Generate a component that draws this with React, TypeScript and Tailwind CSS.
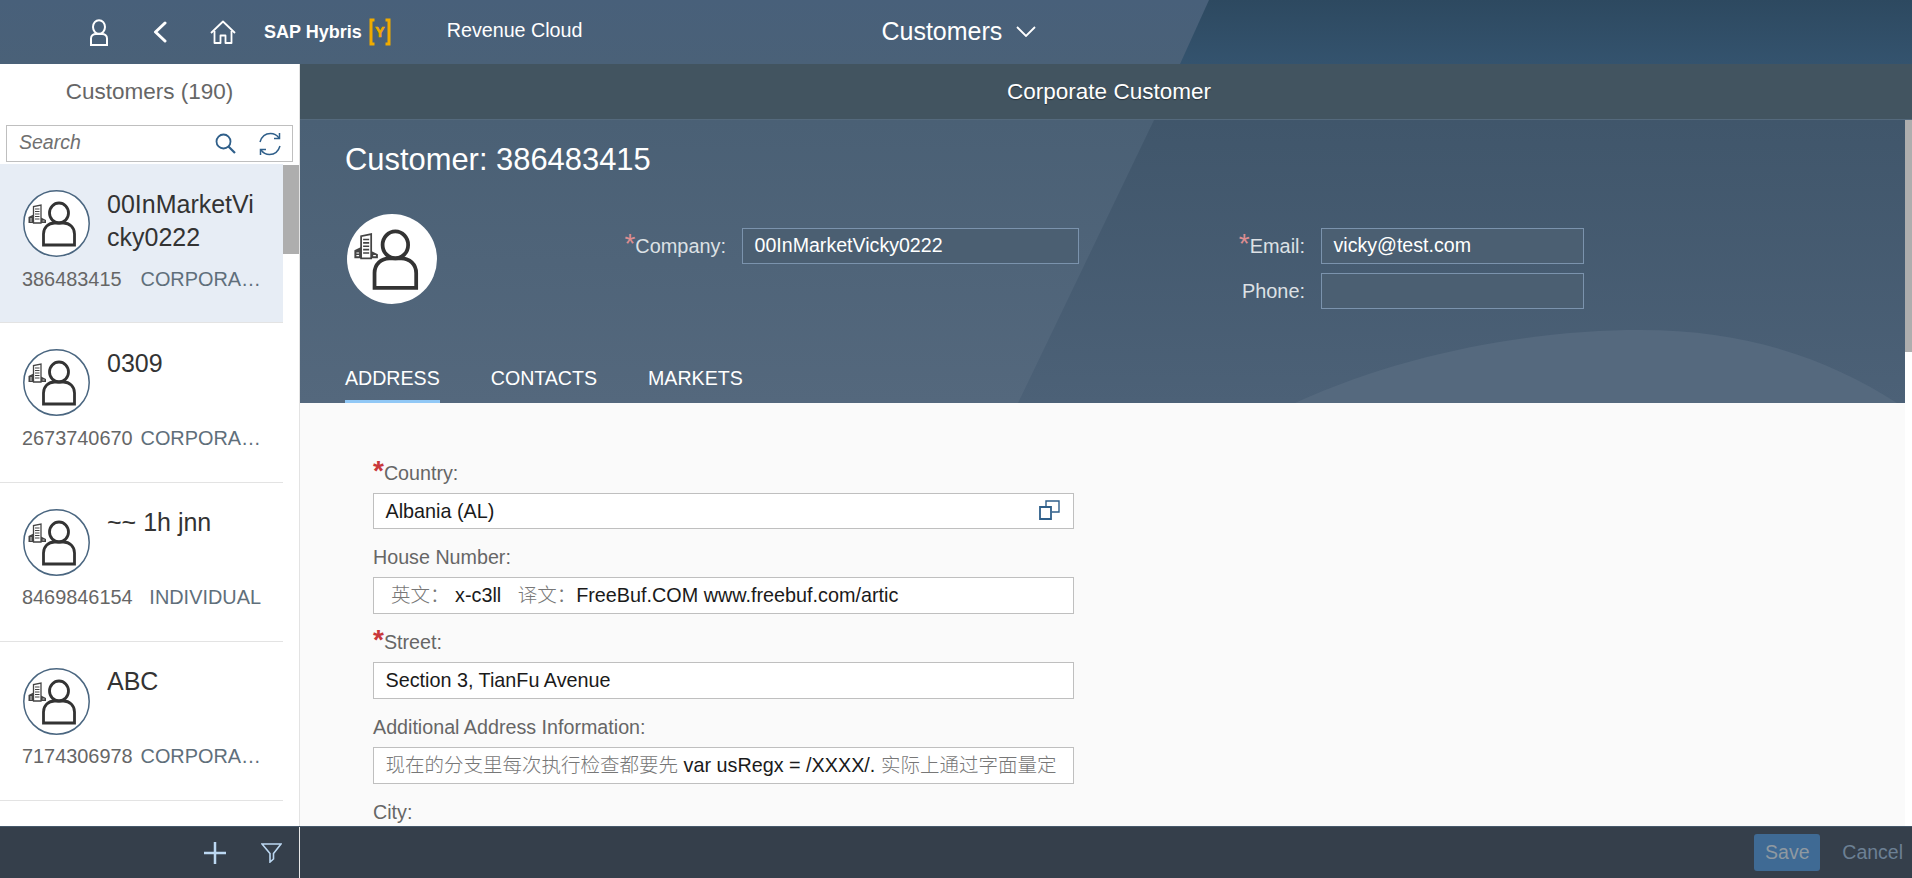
import { ReactNode } from "react";

const customers = [
  { name: "00InMarketVicky0222", id: "386483415", type: "CORPORA…", selected: true },
  { name: "0309", id: "2673740670", type: "CORPORA…" },
  { name: "~~ 1h jnn", id: "8469846154", type: "INDIVIDUAL" },
  { name: "ABC", id: "7174306978", type: "CORPORA…" },
];

function CustomerGlyph() {
  return (
    <>
      {/* building */}
      <path d="M10.500 33V16.500l7.500-1.500V33z" fill="none" stroke="#444" strokeWidth="1.300" />
      <path d="M12 19h4.500M12 21.500h4.500M12 24h4.500M12 26.500h4.500M12 29h4.500" stroke="#444" strokeWidth="1.200" />
      <path d="M5.500 33v-6l5-2.500V33zM18 33v-5.500l5 2.500v3z" fill="#444" />
      <path d="M7 29h2M7 31h2M19.500 31h2" stroke="#fff" strokeWidth="0.800" />
      {/* person */}
      <ellipse cx="36" cy="23" rx="9.500" ry="10" fill="none" stroke="#333" strokeWidth="2.800" />
      <path d="M20.500 55V44c0-6.500 5-11 11-11h9c6 0 11 4.500 11 11v11z" fill="none" stroke="#333" strokeWidth="2.800" />
    </>
  );
}

function Avatar({ big }: { big?: boolean }) {
  if (big) {
    return (
      <svg viewBox="0 0 67 67" className="w-[90px] h-[90px] shrink-0">
        <circle cx="33.500" cy="33.500" r="33.500" fill="#fff" />
        <CustomerGlyph />
      </svg>
    );
  }
  return (
    <svg viewBox="0 0 67 67" className="w-[67px] h-[67px] shrink-0">
      <circle cx="33.500" cy="33.500" r="32.700" fill="#fff" stroke="#4a6680" strokeWidth="1.500" />
      <CustomerGlyph />
    </svg>
  );
}

function CustomerRow({ name, id, type, selected }: { name: string; id: string; type: string; selected?: boolean }) {
  return (
    <div className={`h-[159.25px] w-[283px] shrink-0 pt-[26px] pl-[23px] border-b border-[#e3e3e3] ${selected ? "bg-[#e7edf5]" : "bg-white"}`}>
      <div className="flex h-[67px]">
        <Avatar />
        <div className="ml-[17px] -mt-[2.500px] w-[150px] text-[25px] leading-[33px] text-[#333] break-all">{name}</div>
      </div>
      <div className="mt-[9.500px] -ml-px flex justify-between text-[19.900px] leading-[24px] w-[239px]">
        <span className="text-[#666]">{id}</span>
        <span className="text-[#5f6f7b]">{type}</span>
      </div>
    </div>
  );
}

function HeroField({ label, value, required, labelWidth, inputWidth }: { label: string; value?: string; required?: boolean; labelWidth: string; inputWidth: string }) {
  return (
    <div className="flex items-center h-[36px]">
      <div className={`${labelWidth} text-right text-[19.900px] leading-[24px] text-[#dde1e5]`}>
        {required && <span className="text-[28px] leading-[0] text-[#dc8d90]">*</span>}
        {label}
      </div>
      <div className={`${inputWidth} ml-[16px] h-[36px] border border-[#7b93ad] bg-[#4b5f72] px-[11.500px] text-[19.600px] leading-[32px] text-white`}>{value}</div>
    </div>
  );
}

function FormField({ label, required, height, children, icon }: { label: string; required?: boolean; height: string; children: ReactNode; icon?: ReactNode }) {
  return (
    <div className="mb-[16px]">
      <div className="h-[24px] text-[19.700px] leading-[25px] text-[#666]">
        {required && <span className="text-[28px] leading-[0] font-bold text-[#c9383a]">*</span>}
        {label}
      </div>
      <div className={`relative mt-[8px] ${height} w-[701px] border border-[#bfbfbf] bg-white px-[11.500px] text-[19.800px] leading-[34px] text-[#1a1a1a] whitespace-pre overflow-hidden`}>
        {children}
        {icon}
      </div>
    </div>
  );
}

function Cjk({ children }: { children: ReactNode }) {
  return <span className="text-[19.500px] text-[#777] font-light">{children}</span>;
}

export default function App() {
  return (
    <div className="h-screen w-full flex flex-col overflow-hidden bg-white [font-family:'Liberation_Sans','Noto_Sans_CJK_SC',sans-serif]">
      {/* Top bar */}
      <header className="relative h-16 shrink-0 flex items-center bg-gradient-to-b from-[#48607a] to-[#4a6178] text-white">
        <div className="absolute inset-0 bg-gradient-to-b from-[#2d4960] to-[#34536e] [clip-path:polygon(1209px_0,100%_0,100%_100%,1180px_100%)]" />
        <div className="relative flex items-center h-full w-full">
          <svg viewBox="0 0 20 27" className="ml-[89px] w-[20px] h-[27px]" fill="none" stroke="#fff" strokeWidth="2">
            <ellipse cx="10" cy="8" rx="6" ry="6.800" />
            <path d="M2 26v-6.500C2 16.500 4.500 15 7 15h6c2.500 0 5 1.500 5 4.500V26z" />
          </svg>
          <svg viewBox="0 0 14 22" className="ml-[44px] w-[14px] h-[22px]" fill="none" stroke="#fff" strokeWidth="3" strokeLinecap="round" strokeLinejoin="round">
            <path d="M12 2 2.500 11 12 20" />
          </svg>
          <svg viewBox="0 0 26 24" className="ml-[43px] w-[26px] h-[24px]" fill="none" stroke="#fff" strokeWidth="1.800" strokeLinejoin="round">
            <path d="M1 13 13 1.500 25 13" />
            <path d="M4.500 11v12h6v-7.500h5V23h6V11" />
          </svg>
          <span className="ml-[28px] -mt-px text-[18px] font-bold leading-none">SAP Hybris</span>
          <svg viewBox="0 0 24 28" className="ml-[6px] w-[24px] h-[28px]">
            <path d="M6.500 2H3v24h3.500M17.500 2H21v24h-3.500" fill="none" stroke="#f0ab00" strokeWidth="3" />
            <text x="12" y="19" textAnchor="middle" fontSize="14" fontWeight="700" fill="#f0ab00" stroke="#f0ab00" strokeWidth="0.600">Y</text>
          </svg>
          <span className="ml-[55px] text-[19.700px] leading-none -mt-[3px]">Revenue Cloud</span>
          <span className="ml-[299px] text-[25px] leading-none -mt-[2px]">Customers</span>
          <svg viewBox="0 0 20 11" className="ml-[14px] -mt-px w-[20px] h-[11px]" fill="none" stroke="#fff" strokeWidth="1.800">
            <path d="M1 1l9 9 9-9" />
          </svg>
        </div>
      </header>

      {/* Body */}
      <div className="flex-1 min-h-0 flex">
        {/* Customer list */}
        <aside className="w-[300px] shrink-0 flex flex-col bg-white border-r border-[#e3e3e3]">
          <div className="h-[61px] shrink-0 pt-[10px] text-center text-[22.500px] leading-[36px] text-[#666]">Customers (190)</div>
          <div className="mx-[6px] h-[37px] w-[287px] shrink-0 flex items-center border border-[#bfbfbf] pl-[12px] pr-[9px]">
            <span className="flex-1 -mt-[2px] italic text-[19.500px] text-[#707070]">Search</span>
            <svg viewBox="0 0 21 21" className="w-[21px] h-[21px]" fill="none" stroke="#2f5f8a" strokeWidth="1.800">
              <circle cx="8.500" cy="8.500" r="7" />
              <path d="M13.500 13.500 20 20" strokeWidth="2.200" />
            </svg>
            <svg viewBox="0 0 24 24" className="ml-[22px] mr-px w-[24px] h-[24px]" fill="none" stroke="#2f5f8a" strokeWidth="1.500">
              <path d="M2 10C3.500 5 7.500 1.500 12.500 1.500c3.500 0 6.500 1.700 8.500 4.500" />
              <path d="M22 14c-1.500 5-5.500 8.500-10.500 8.500C8 22.500 5 20.800 3 18" />
              <path d="M21.500 1v5.500H16M2.500 23v-5.500H8" />
            </svg>
          </div>
          <div className="relative flex-1 min-h-0 overflow-hidden mt-[2px] flex flex-col">
            {customers.map((c) => (
              <CustomerRow key={c.name} {...c} />
            ))}
            <div className="absolute right-0 top-[1px] w-[16px] h-[89px] bg-[#aeaeae]" />
          </div>
        </aside>

        {/* Detail */}
        <main className="relative flex-1 min-w-0 flex flex-col bg-white">
          <div className="h-[56px] shrink-0 flex items-center justify-center pl-[6px] bg-[#425460] border-b border-[#54697c] text-[22.500px] text-white [text-shadow:0_1px_1px_rgba(0,0,0,0.4)]">
            Corporate Customer
          </div>

          <section className="relative h-[283px] shrink-0 mr-[7px] overflow-hidden bg-gradient-to-b from-[#4a6075] to-[#54687d] text-white">
            <svg className="absolute inset-0 w-full h-full" viewBox="0 0 1605 283" preserveAspectRatio="none">
              <defs>
                <linearGradient id="heroDark" x1="0" y1="0" x2="0" y2="1">
                  <stop offset="0" stopColor="#40566b" />
                  <stop offset="1" stopColor="#4c6177" />
                </linearGradient>
              </defs>
              <path d="M854 0H1605V283H718z" fill="url(#heroDark)" />
              <path d="M995 283C1110 230 1240 210 1340 210C1450 210 1530 240 1597 283z" fill="#55697e" />
            </svg>
            <div className="relative h-full flex flex-col pl-[45px]">
              <div className="mt-[20px] text-[30.900px] leading-[40px]">Customer: 386483415</div>
              <div className="mt-[34px] flex">
                <div className="ml-[2px]">
                  <Avatar big />
                </div>
                <div className="pt-[14px]">
                  <HeroField label="Company:" value="00InMarketVicky0222" required labelWidth="w-[289px]" inputWidth="w-[337px]" />
                </div>
                <div className="pt-[14px] flex flex-col gap-[9px]">
                  <HeroField label="Email:" value="vicky@test.com" required labelWidth="w-[226px]" inputWidth="w-[263px]" />
                  <HeroField label="Phone:" labelWidth="w-[226px]" inputWidth="w-[263px]" />
                </div>
              </div>
              <nav className="mt-auto flex gap-[51px] text-[19.600px] leading-[24px]">
                <span className="pb-[10px] border-b-[3px] border-[#91c8f6]">ADDRESS</span>
                <span className="pb-[10px] border-b-[3px] border-transparent">CONTACTS</span>
                <span className="pb-[10px] border-b-[3px] border-transparent">MARKETS</span>
              </nav>
            </div>
          </section>

          <div className="absolute right-0 top-[56px] w-[7px] h-[232px] bg-[#aeaeae]" />

          <section className="flex-1 min-h-0 overflow-hidden mr-[7px] bg-[#fafafa] pt-[58px] pl-[73px]">
            <FormField
              label="Country:"
              required
              height="h-[36px]"
              icon={
                <svg viewBox="0 0 21 20" className="absolute right-[13px] top-[6px] w-[21px] h-[20px]" fill="none" stroke="#2f5f8a" strokeWidth="1.800">
                  <path d="M1 7h11v12H1z" />
                  <path d="M7 6V1h13v11h-7" strokeWidth="1.400" />
                </svg>
              }
            >
              Albania (AL)
            </FormField>
            <FormField label="House Number:" height="h-[37px]">
              {" "}
              <Cjk>英文：</Cjk>
              {" x-c3ll   "}
              <Cjk>译文：</Cjk>
              FreeBuf.COM www.freebuf.com/artic
            </FormField>
            <FormField label="Street:" required height="h-[37px]">
              Section 3, TianFu Avenue
            </FormField>
            <FormField label="Additional Address Information:" height="h-[37px]">
              <Cjk>现在的分支里每次执行检查都要先</Cjk>
              {" var usRegx = /XXXX/. "}
              <Cjk>实际上通过字面量定</Cjk>
            </FormField>
            <div className="h-[24px] text-[19.700px] leading-[25px] text-[#666]">City:</div>
          </section>
        </main>
      </div>

      {/* Bottom bar */}
      <footer className="h-[52px] shrink-0 flex bg-[#353f4b] border-t border-[#46586a]">
        <div className="w-[300px] shrink-0 flex items-center border-r border-[#e8e8e8] pl-[204px]">
          <svg viewBox="0 0 22 22" className="w-[22px] h-[22px]" stroke="#bcd8f2" strokeWidth="2.500">
            <path d="M0 11h22M11 0v22" />
          </svg>
          <svg viewBox="0 0 21 20" className="ml-[35px] w-[21px] h-[20px]" fill="none" stroke="#bcd8f2" strokeWidth="1.600">
            <path d="M1 1h19l-7.500 9.500V16l-3.500 3v-8.500z" />
          </svg>
        </div>
        <div className="flex-1 flex items-center justify-end pr-[9px] text-[19.500px]">
          <span className="w-[66px] h-[37px] rounded-[3px] bg-[#3f6a94] flex items-center justify-center text-[#8f99a1]">Save</span>
          <span className="ml-[22px] text-[#6c8094]">Cancel</span>
        </div>
      </footer>
    </div>
  );
}
